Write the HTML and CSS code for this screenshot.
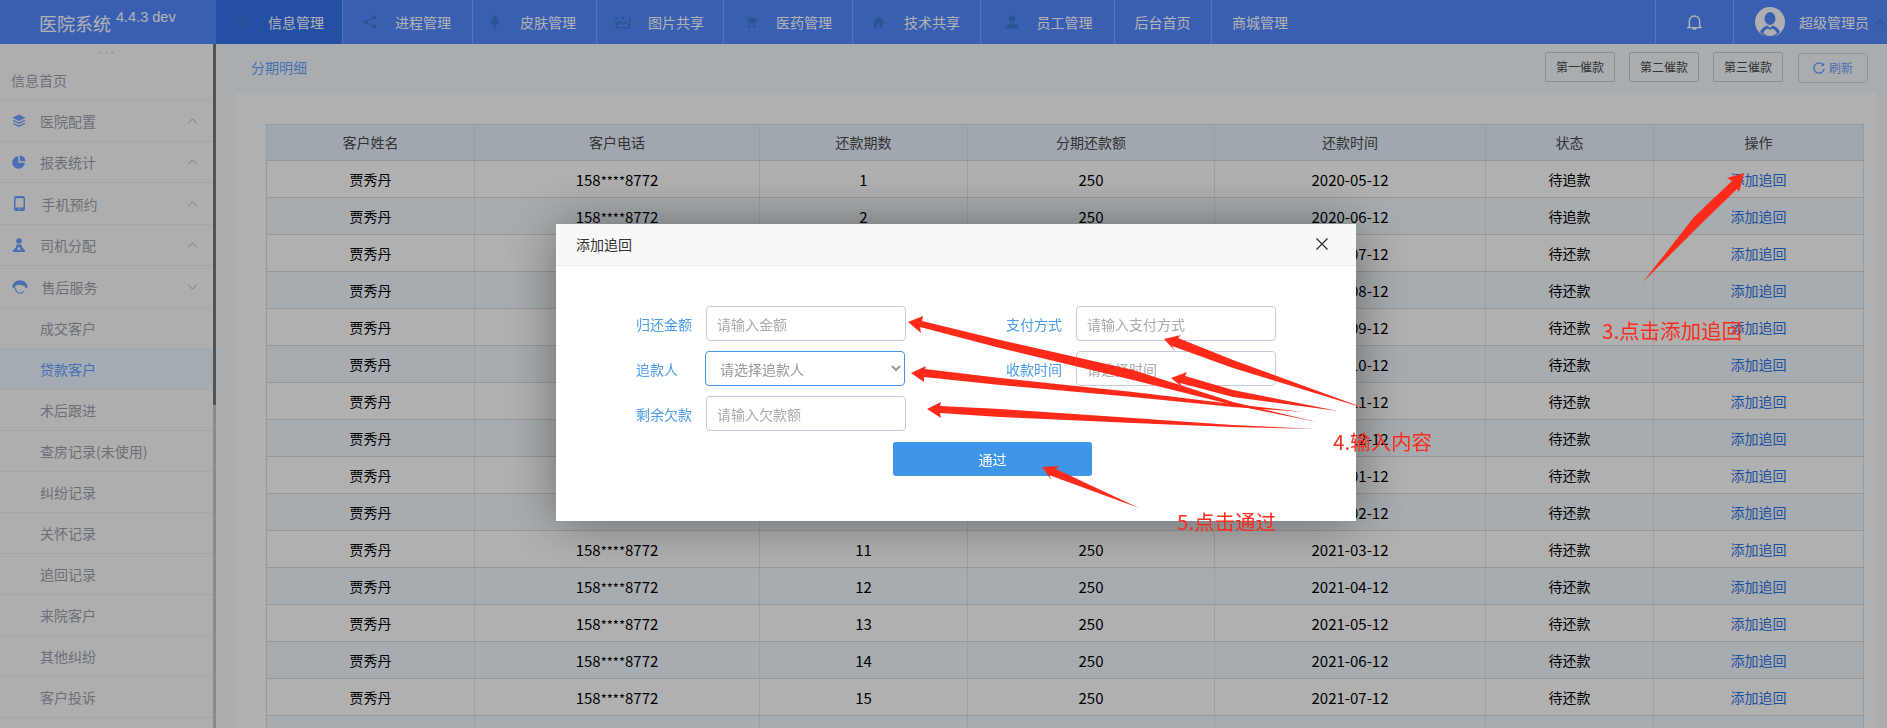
FILE: index.html
```html
<!DOCTYPE html>
<html>
<head>
  <meta charset="utf-8">
  <title>分期明细</title>
  <link rel="stylesheet" href="styles.css">
</head>
<body>
  <header class="topbar">
    <div class="logo">医院系统<sup>4.4.3 dev</sup></div>
    <nav class="nav">
      <a class="tab active"><svg class="tab-icon" viewBox="0 0 20 20"><path d="M10 1.5l7.5 4.2v8.6L10 18.5l-7.5-4.2V5.7zM2.5 5.7L10 10l7.5-4.3M10 10v8.500M10 1.500v4M6 8l4-2.500 4 2.500v4l-4 2.500-4-2.500z" fill="none" stroke="currentColor" stroke-width="1.500"/></svg>信息管理</a>
      <a class="tab"><svg class="tab-icon" viewBox="0 0 20 20"><circle cx="15" cy="4.500" r="2.500"/><circle cx="5" cy="10" r="2.500"/><circle cx="15" cy="15.500" r="2.500"/><path d="M15 4.500L5 10l10 5.500" fill="none" stroke="currentColor" stroke-width="1.200"/></svg>进程管理</a>
      <a class="tab"><svg class="tab-icon" viewBox="0 0 20 20"><path d="M10 1l3.500 6c1.500 2.500 1.500 5-.5 6.500-.8.600-1.800.800-2 .800v4.700H9v-4.700c-.2 0-1.200-.2-2-.8-2-1.500-2-4-.5-6.500z"/></svg>皮肤管理</a>
      <a class="tab"><svg class="tab-icon" viewBox="0 0 20 20"><path d="M1.500 4v13h17V4M1.500 14l5-5 3.500 3.500 3-3 4.500 4.500" fill="none" stroke="currentColor" stroke-width="1.600"/><circle cx="10" cy="5" r="1.800"/></svg>图片共享</a>
      <a class="tab"><svg class="tab-icon" viewBox="0 0 20 20"><path d="M2 3h3l1 2h12l-2.500 7H7.500L5 4.500H2z"/><circle cx="8" cy="16" r="1.800"/><circle cx="14" cy="16" r="1.800"/></svg>医药管理</a>
      <a class="tab"><svg class="tab-icon" viewBox="0 0 20 20"><path d="M10 3L1 11.500h2.700V17h4v-5h3v5h4v-5.500H18.500z" /></svg>技术共享</a>
      <a class="tab"><svg class="tab-icon" viewBox="0 0 20 20"><circle cx="10" cy="6" r="4"/><path d="M2 18c0-4 3-6.500 8-6.500s8 2.500 8 6.500z"/></svg>员工管理</a>
      <a class="tab plain">后台首页</a>
      <a class="tab plain last">商城管理</a>
    </nav>
    <div class="bell">
      <svg viewBox="0 0 16 18" width="15" height="17"><path d="M2.500 13V7.500a5.500 5.500 0 0 1 11 0V13l1.500 1.500H1z M6 16h4" fill="none" stroke="currentColor" stroke-width="1.500"/></svg>
    </div>
    <div class="user">
      <svg class="avatar" viewBox="0 0 30 30"><circle cx="15" cy="15" r="15" fill="#fbfbff"/><ellipse cx="15" cy="11.500" rx="5.500" ry="6.500" fill="#5489ff"/><path d="M5 25c2-4.500 5-5.500 7.500-6.500L15 21l2.500-2.500c2.500 1 5.500 2 7.500 6.500-2.500 3-6 5-10 5s-7.500-2-10-5z" fill="#5489ff"/><path d="M8 26c2-3 3.500-4 5-4.500l2 1.500 2-1.500c1.500.5 3 1.500 5 4.500-2 1.800-4.500 3-7 3s-5-1.200-7-3z" fill="#fbfbff"/></svg>
      <span>超级管理员</span>
      <svg class="user-caret" viewBox="0 0 12 7" width="12" height="7"><path d="M1 6l5-5 5 5" fill="none" stroke="currentColor" stroke-width="1.200"/></svg>
    </div>
  </header>

  <div class="main">
    <aside class="sidebar">
      <div class="side-list">
        <div class="grip">•••</div>
        <a class="side-home">信息首页</a>
        <a class="side-item"><svg class="side-icon" viewBox="0 0 14 14"><path d="M7 .5l6.500 3.300L7 7 .5 3.800zM1.800 6L7 8.600 12.200 6l1.300.7L7 10 .5 6.700zM1.800 9L7 11.600 12.200 9l1.300.7L7 13 .5 9.700z"/></svg><span>医院配置</span><svg class="caret" viewBox="0 0 12 7"><path d="M1 6l5-5 5 5"/></svg></a>
        <a class="side-item"><svg class="side-icon" viewBox="0 0 14 14"><path d="M6.300 1.200v6.500h6.500A6.300 6.300 0 1 1 6.300 1.200z"/><path d="M7.800 .5a5.800 5.800 0 0 1 5.700 5.700H7.800z"/></svg><span>报表统计</span><svg class="caret" viewBox="0 0 12 7"><path d="M1 6l5-5 5 5"/></svg></a>
        <a class="side-item tall phone"><svg class="side-icon" viewBox="0 0 11 15"><path d="M2 0h7a2 2 0 0 1 2 2v11a2 2 0 0 1-2 2H2a2 2 0 0 1-2-2V2a2 2 0 0 1 2-2zM1.500 2.200v9.300h8V2.200zM4.500 12.500v1h2v-1z" fill-rule="evenodd"/></svg><span>手机预约</span><svg class="caret" viewBox="0 0 12 7"><path d="M1 6l5-5 5 5"/></svg></a>
        <a class="side-item"><svg class="side-icon" viewBox="0 0 14 14"><circle cx="7" cy="3" r="2.800"/><path d="M4.800 6.500h4.400l1 3 3.300 3.200-1 1.300H1.500l-1-1.300L3.800 9.500zM7 8.500l-2 2.800 2 1 2-1z" fill-rule="evenodd"/></svg><span>司机分配</span><svg class="caret" viewBox="0 0 12 7"><path d="M1 6l5-5 5 5"/></svg></a>
        <a class="side-item tall face"><svg class="side-icon" viewBox="0 0 16 14"><path d="M8 .2c4.200 0 7.200 2.800 7.800 6.800l-2.300 1.800-.8-2.600C11 5.500 8 5 5.500 4.500 4.800 5.500 3.800 6 3.200 6.400L2.500 8.800.2 7C.8 3 3.800.2 8 .2z"/><path d="M3.400 8c.4 3 2.300 5.300 4.600 5.300 1.500 0 2.800-.7 3.700-2" fill="none" stroke="currentColor" stroke-width="1.100"/></svg><span>售后服务</span><svg class="caret" viewBox="0 0 12 7"><path d="M1 1l5 5 5-5"/></svg></a>
        <a class="side-sub">成交客户</a>
        <a class="side-sub current">贷款客户</a>
        <a class="side-sub">术后跟进</a>
        <a class="side-sub">查房记录(未使用)</a>
        <a class="side-sub">纠纷记录</a>
        <a class="side-sub">关怀记录</a>
        <a class="side-sub">追回记录</a>
        <a class="side-sub">来院客户</a>
        <a class="side-sub">其他纠纷</a>
        <a class="side-sub">客户投诉</a>
      </div>
      <div class="side-track"><div class="side-thumb"></div></div>
    </aside>

    <section class="content">
      <div class="crumbs">
        <span class="crumb">分期明细</span>
        <div class="tools">
          <button class="btn">第一催款</button>
          <button class="btn">第二催款</button>
          <button class="btn">第三催款</button>
          <button class="btn refresh"><svg viewBox="0 0 14 14" width="12" height="12"><path d="M12 3.500A6 6 0 1 0 13 8" fill="none" stroke="currentColor" stroke-width="1.600"/><path d="M13 .8v4H9z" fill="currentColor"/></svg>刷新</button>
        </div>
      </div>
      <div class="card">
        <table class="grid">
          <colgroup>
            <col class="c1"><col class="c2"><col class="c3"><col class="c4"><col class="c5"><col class="c6"><col class="c7">
          </colgroup>
          <thead>
            <tr><th>客户姓名</th><th>客户电话</th><th>还款期数</th><th>分期还款额</th><th>还款时间</th><th>状态</th><th>操作</th></tr>
          </thead>
          <tbody>
            <tr><td>贾秀丹</td><td class="num">158<span class="stars">****</span>8772</td><td class="num">1</td><td class="num">250</td><td class="num">2020-05-12</td><td>待追款</td><td><a>添加追回</a></td></tr>
            <tr><td>贾秀丹</td><td class="num">158<span class="stars">****</span>8772</td><td class="num">2</td><td class="num">250</td><td class="num">2020-06-12</td><td>待追款</td><td><a>添加追回</a></td></tr>
            <tr><td>贾秀丹</td><td class="num">158<span class="stars">****</span>8772</td><td class="num">3</td><td class="num">250</td><td class="num">2020-07-12</td><td>待还款</td><td><a>添加追回</a></td></tr>
            <tr><td>贾秀丹</td><td class="num">158<span class="stars">****</span>8772</td><td class="num">4</td><td class="num">250</td><td class="num">2020-08-12</td><td>待还款</td><td><a>添加追回</a></td></tr>
            <tr><td>贾秀丹</td><td class="num">158<span class="stars">****</span>8772</td><td class="num">5</td><td class="num">250</td><td class="num">2020-09-12</td><td>待还款</td><td><a>添加追回</a></td></tr>
            <tr><td>贾秀丹</td><td class="num">158<span class="stars">****</span>8772</td><td class="num">6</td><td class="num">250</td><td class="num">2020-10-12</td><td>待还款</td><td><a>添加追回</a></td></tr>
            <tr><td>贾秀丹</td><td class="num">158<span class="stars">****</span>8772</td><td class="num">7</td><td class="num">250</td><td class="num">2020-11-12</td><td>待还款</td><td><a>添加追回</a></td></tr>
            <tr><td>贾秀丹</td><td class="num">158<span class="stars">****</span>8772</td><td class="num">8</td><td class="num">250</td><td class="num">2020-12-12</td><td>待还款</td><td><a>添加追回</a></td></tr>
            <tr><td>贾秀丹</td><td class="num">158<span class="stars">****</span>8772</td><td class="num">9</td><td class="num">250</td><td class="num">2021-01-12</td><td>待还款</td><td><a>添加追回</a></td></tr>
            <tr><td>贾秀丹</td><td class="num">158<span class="stars">****</span>8772</td><td class="num">10</td><td class="num">250</td><td class="num">2021-02-12</td><td>待还款</td><td><a>添加追回</a></td></tr>
            <tr><td>贾秀丹</td><td class="num">158<span class="stars">****</span>8772</td><td class="num">11</td><td class="num">250</td><td class="num">2021-03-12</td><td>待还款</td><td><a>添加追回</a></td></tr>
            <tr><td>贾秀丹</td><td class="num">158<span class="stars">****</span>8772</td><td class="num">12</td><td class="num">250</td><td class="num">2021-04-12</td><td>待还款</td><td><a>添加追回</a></td></tr>
            <tr><td>贾秀丹</td><td class="num">158<span class="stars">****</span>8772</td><td class="num">13</td><td class="num">250</td><td class="num">2021-05-12</td><td>待还款</td><td><a>添加追回</a></td></tr>
            <tr><td>贾秀丹</td><td class="num">158<span class="stars">****</span>8772</td><td class="num">14</td><td class="num">250</td><td class="num">2021-06-12</td><td>待还款</td><td><a>添加追回</a></td></tr>
            <tr><td>贾秀丹</td><td class="num">158<span class="stars">****</span>8772</td><td class="num">15</td><td class="num">250</td><td class="num">2021-07-12</td><td>待还款</td><td><a>添加追回</a></td></tr>
            <tr><td></td><td></td><td></td><td></td><td></td><td></td><td></td></tr>
          </tbody>
        </table>
      </div>
    </section>
  </div>

  <div class="shade"></div>

  <div class="modal">
    <div class="modal-head">
      <span>添加追回</span>
      <svg class="modal-close" viewBox="0 0 12 12" width="12" height="12"><path d="M.5.5l11 11M11.500.5l-11 11" fill="none" stroke="currentColor" stroke-width="1.300"/></svg>
    </div>
    <div class="modal-form">
      <div class="form-row">
        <label>归还金额</label><input class="field" placeholder="请输入金额">
        <label>支付方式</label><input class="field" placeholder="请输入支付方式">
      </div>
      <div class="form-row">
        <label>追款人</label>
        <select class="field picker"><option>请选择追款人</option></select>
        <label>收款时间</label><input class="field" placeholder="请选择时间">
      </div>
      <div class="form-row">
        <label>剩余欠款</label><input class="field" placeholder="请输入欠款额">
      </div>
      <button class="pass">通过</button>
    </div>
  </div>

  <!-- red marks drawn on top of the screenshot -->
  <svg class="marks" viewBox="0 0 1887 728" width="1887" height="728">
    <polygon points="1744,173 1727,178 1732,181 1694,217 1643,282 1702,223 1737,189 1739,192"/>
    <polygon points="908,322 923,316 922,321 1000,340 1133,370 1233,402 1317,422 1233,405 1133,380 1000,348 920,327 921,333"/>
    <polygon points="911,373 926,366 925,369 1000,378 1133,392 1233,404 1304,412 1233,407 1133,397 1000,385 924,377 924,382"/>
    <polygon points="927,409 941,402 940,406 1000,409 1133,418 1233,425 1316,429 1233,427 1133,423 1000,417 940,413 941,418"/>
    <polygon points="1164,339 1181,335 1178,338 1233,360 1367,409 1233,368 1172,346 1175,351"/>
    <polygon points="1171,378 1187,372 1185,376 1233,390 1338,411 1233,397 1180,383 1182,387"/>
    <polygon points="1042,467 1059,466 1056,469 1139,508 1049,475 1052,481"/>
  </svg>
  <span class="note note-3">3.点击添加追回</span>
  <span class="note note-4">4.输入内容</span>
  <span class="note note-5">5.点击通过</span>
</body>
</html>
```

FILE: styles.css
```css
* {
  box-sizing: border-box;
}
html, body {
  margin: 0;
  height: 728px;
  overflow: hidden;
}
body {
  font-family: "Noto Sans CJK SC", "Noto Sans", sans-serif;
  font-size: 14px;
  color: #000;
  background: #f2f8fc;
}
a {
  text-decoration: none;
}

/* top bar */
.topbar {
  display: flex;
  height: 44px;
  background: #5489ff;
  color: #fff;
}
.logo {
  width: 216px;
  padding-left: 39px;
  font-size: 18px;
  line-height: 46px;
  white-space: nowrap;
}
.logo sup {
  font-family: "Liberation Sans", sans-serif;
  font-size: 14.500px;
  line-height: 0;
  margin-left: 5px;
  position: relative;
  top: -2px;
}
.nav {
  display: flex;
  flex: 1;
}
.tab {
  display: flex;
  align-items: center;
  border-right: 1px solid #7ea6ff;
  color: #fff;
  white-space: nowrap;
}
.tab.active {
  background: #3570ed;
}
.tab:nth-child(1) { width: 127px; padding-left: 19px; }
.tab:nth-child(2) { width: 129.500px; padding-left: 19px; }
.tab:nth-child(3) { width: 124px; padding-left: 14.500px; }
.tab:nth-child(4) { width: 127.500px; padding-left: 18.500px; }
.tab:nth-child(5) { width: 128.500px; padding-left: 19px; }
.tab:nth-child(6) { width: 128px; padding-left: 18.500px; }
.tab:nth-child(7) { width: 134px; padding-left: 23px; }
.tab.plain {
  width: 97.500px;
  padding-left: 20px;
}
.tab.last {
  border-right: 0;
}
.tab-icon {
  width: 16px;
  height: 16px;
  margin-right: 17px;
  fill: #3b7ad6;
  color: #3b7ad6;
  flex: none;
}
.bell {
  display: flex;
  align-items: center;
  justify-content: center;
  width: 79px;
  border-left: 1px solid #7ea6ff;
  border-right: 1px solid #7ea6ff;
}
.user {
  display: flex;
  align-items: center;
  width: 153px;
  padding-left: 21px;
  white-space: nowrap;
}
.avatar {
  width: 30px;
  height: 30px;
  margin-right: 14px;
  flex: none;
}
.user-caret {
  margin-left: 5px;
  color: #3b7ad6;
  flex: none;
}

/* layout */
.main {
  display: flex;
  height: 684px;
}
.sidebar {
  display: flex;
  width: 216px;
  flex: none;
  background: #fafafa;
}
.side-list {
  flex: 1;
  min-width: 0;
}
.side-track {
  width: 3px;
  background: #c8c8c8;
}
.side-thumb {
  height: 361px;
  background: #777;
}
.grip {
  height: 16px;
  font-size: 6px;
  line-height: 18px;
  text-align: center;
  color: #b8b8b8;
}
.side-home, .side-item, .side-sub {
  display: flex;
  align-items: center;
  height: 41px;
  border-bottom: 1px solid #ececec;
  color: #9aa1ad;
  white-space: nowrap;
}
.side-home {
  padding-left: 11px;
}
.side-item {
  padding-left: 12px;
}
.side-item.tall {
  height: 42px;
}
.side-item span {
  flex: 1;
  margin-left: 14px;
}
.side-icon {
  width: 14px;
  height: 14px;
  fill: #6a9fff;
  color: #6a9fff;
  flex: none;
}
.phone .side-icon {
  width: 11px;
  height: 15px;
  margin-left: 2px;
}
.phone span {
  margin-left: 16.500px;
}
.face .side-icon {
  width: 16px;
  height: 14px;
}
.face span {
  margin-left: 13.500px;
}
.caret {
  width: 11px;
  height: 6px;
  margin-right: 15px;
  fill: none;
  stroke: #a3aab6;
  stroke-width: 1;
  flex: none;
}
.side-sub {
  padding-left: 40px;
}
.side-sub.current {
  background: #e8f7ff;
  color: #6a9fff;
}

/* content */
.content {
  flex: 1;
  min-width: 0;
}
.crumbs {
  display: flex;
  align-items: center;
  justify-content: space-between;
  height: 49px;
  padding: 0 19px 4px 35px;
}
.crumb {
  color: #6a9fff;
}
.tools {
  display: flex;
  align-items: center;
  gap: 14px;
}
.btn {
  width: 70px;
  height: 30px;
  padding: 0;
  border: 1px solid #cacaca;
  border-radius: 2px;
  background: transparent;
  color: #4a4a4a;
  font-family: inherit;
  font-size: 12px;
}
.btn.refresh {
  display: flex;
  align-items: center;
  justify-content: center;
  gap: 4px;
  margin: 2px 0 0 1px;
  border-color: #ccd6e4;
  border-radius: 4px;
  color: #6a9fff;
}
.card {
  height: 635px;
  margin: 0 11px 0 20px;
  padding: 31px 0 0 30px;
  background: #fdfdfd;
  overflow: hidden;
}

/* table */
.grid {
  width: 1597px;
  border-collapse: collapse;
  table-layout: fixed;
  border-top: 1px solid #cce3f5;
  border-left: 1px solid #cce3f5;
  border-right: 1px solid #cce3f5;
}
.c1 { width: 208px; }
.c2 { width: 285px; }
.c3 { width: 208px; }
.c4 { width: 247px; }
.c5 { width: 271px; }
.c6 { width: 168px; }
.c7 { width: 210px; }
.grid th, .grid td {
  height: 37px;
  padding: 0;
  text-align: center;
  font-weight: 400;
  border-bottom: 1px solid #d9d9d9;
  border-right: 1px solid #e4e4e4;
}
.grid th {
  height: 36px;
  padding-bottom: 2px;
  background: #e5f0fb;
  color: #4a4a4a;
  border-right-color: #d2e6f7;
}
.grid td.num {
  font-size: 15px;
}
.stars {
  font-size: 13px;
}
.grid tbody tr:nth-child(even) td {
  background: #f0f7fc;
}
.grid th:last-child, .grid td:last-child {
  border-right: 0;
}
.grid td a {
  color: #2f74e0;
}

/* dialog */
.shade {
  position: fixed;
  inset: 0;
  background: rgba(0, 0, 0, .3);
}
.modal {
  position: fixed;
  left: 556px;
  top: 224px;
  width: 800px;
  height: 297px;
  background: #fff;
  box-shadow: 1px 1px 50px rgba(0, 0, 0, .4);
}
.modal-head {
  display: flex;
  align-items: center;
  justify-content: space-between;
  height: 42px;
  padding: 0 28px 2px 20px;
  background: #f8f8f8;
  border-bottom: 1px solid #eee;
  color: #333;
}
.modal-form {
  padding: 40px 0 0 80px;
}
.form-row {
  display: flex;
  align-items: center;
  height: 35px;
  margin-bottom: 10px;
}
.form-row label {
  width: 70px;
  flex: none;
  color: #4a9be8;
  white-space: nowrap;
}
.field {
  width: 200px;
  height: 35px;
  flex: none;
  margin-right: 100px;
  padding: 0 10px;
  border: 1px solid #c5cbdc;
  border-radius: 4px;
  background: #fff;
  font-family: inherit;
  font-size: 14px;
  outline: 0;
}
.field:last-child {
  margin-right: 0;
}
.field::placeholder {
  color: #aaa;
}
.picker {
  border-color: #3f96e8;
  color: #999;
  margin-left: -1px;
  margin-right: 101px;
}
.pass {
  display: block;
  width: 199px;
  height: 34px;
  margin: 11px 0 0 257px;
  padding-bottom: 2px;
  border: 0;
  border-radius: 3px;
  background: #3f96e8;
  color: #fff;
  font-family: inherit;
  font-size: 14px;
}

/* red notes */
.marks {
  position: fixed;
  left: 0;
  top: 0;
  fill: #ff2a1a;
  pointer-events: none;
}
.note {
  position: fixed;
  color: #ff2a1a;
  font-size: 20.500px;
  line-height: 26px;
  white-space: nowrap;
}
.note-3 {
  left: 1602px;
  top: 317px;
}
.note-4 {
  left: 1333px;
  top: 428px;
}
.note-5 {
  left: 1177px;
  top: 508px;
}
```
